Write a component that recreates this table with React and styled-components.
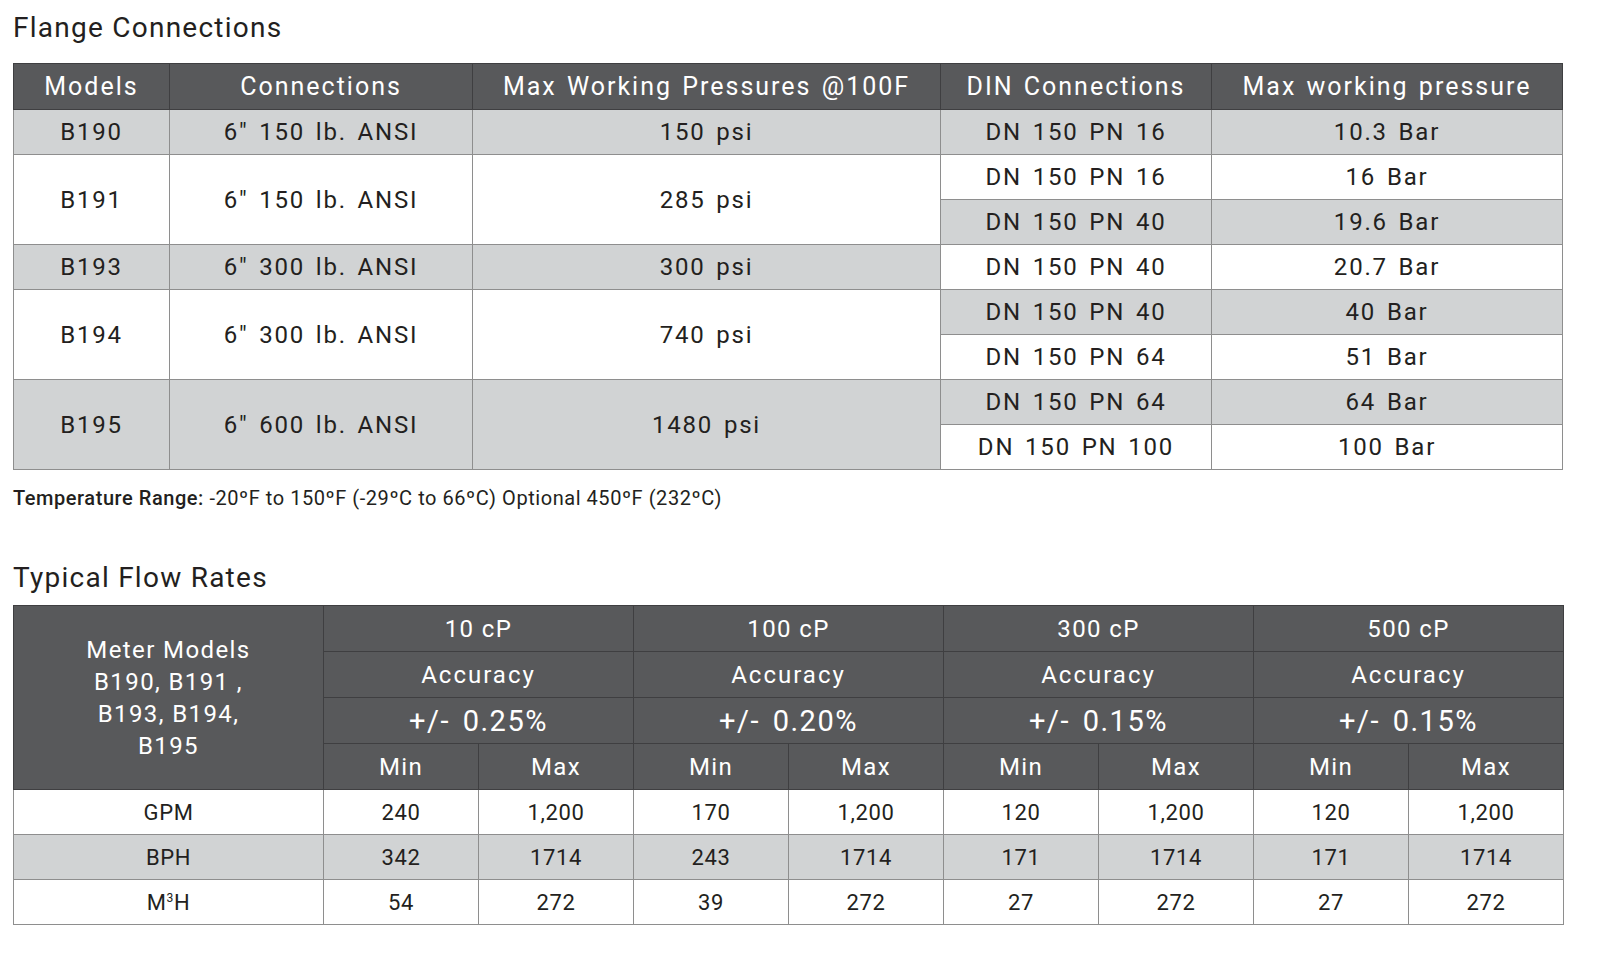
import React from 'react';
import styled, { createGlobalStyle } from 'styled-components';

const GlobalStyle = createGlobalStyle`
  html, body {
    margin: 0;
    padding: 0;
    background: #ffffff;
  }
  body {
    font-family: Roboto, 'Liberation Sans', sans-serif;
    color: #231f20;
  }
`;

const Page = styled.div`
  width: 1598px;
  padding: 10px 0 0 13px;
  box-sizing: border-box;
`;

const Title = styled.h2`
  margin: ${(p) => p.$top || 0}px 0 0;
  font-size: 28px;
  font-weight: 400;
  line-height: 36px;
  letter-spacing: 1.25px;
  color: #231f20;
`;

const Table = styled.table`
  border-collapse: collapse;
  table-layout: fixed;
  width: ${(p) => p.$width}px;
  margin-top: ${(p) => p.$top}px;
  border: 1.5px solid #8a8a8a;
`;

const Head = styled.th`
  background: #58595b;
  color: #ffffff;
  font-weight: 400;
  font-size: ${(p) => (p.$wide ? 25 : p.$size || 24)}px;
  letter-spacing: ${(p) => (p.$wide ? 2 : p.$ls || 1.4)}px;
  word-spacing: ${(p) => (p.$wide ? 2 : p.$ws || 0)}px;
  height: ${(p) => p.$h || 45}px;
  padding: 0;
  text-align: center;
  border: 1.5px solid #3f3f41;
  line-height: ${(p) => p.$lh || 'normal'};
`;

const Cell = styled.td`
  background: ${(p) => (p.$shade ? '#d1d3d4' : '#ffffff')};
  font-size: ${(p) => (p.$wide ? 24 : 22)}px;
  letter-spacing: ${(p) => (p.$wide ? 1.8 : 0.6)}px;
  word-spacing: ${(p) => (p.$wide ? 3 : 0)}px;
  height: ${(p) => p.$h || 44}px;
  padding: 0;
  text-align: center;
  border: 1.5px solid #8e8e8e;
  color: #231f20;
`;

const Note = styled.p`
  margin: 16px 0 0;
  font-size: 20px;
  letter-spacing: 0.55px;
  color: #231f20;
  b {
    font-weight: 500;
  }
`;

const flange = [
  { model: 'B190', conn: '6″ 150 lb. ANSI', psi: '150 psi', din: [['DN 150 PN 16', '10.3 Bar']] },
  { model: 'B191', conn: '6″ 150 lb. ANSI', psi: '285 psi', din: [['DN 150 PN 16', '16 Bar'], ['DN 150 PN 40', '19.6 Bar']] },
  { model: 'B193', conn: '6″ 300 lb. ANSI', psi: '300 psi', din: [['DN 150 PN 40', '20.7 Bar']] },
  { model: 'B194', conn: '6″ 300 lb. ANSI', psi: '740 psi', din: [['DN 150 PN 40', '40 Bar'], ['DN 150 PN 64', '51 Bar']] },
  { model: 'B195', conn: '6″ 600 lb. ANSI', psi: '1480 psi', din: [['DN 150 PN 64', '64 Bar'], ['DN 150 PN 100', '100 Bar']] },
];

const viscosities = [
  { cp: '10 cP', acc: '+/- 0.25%' },
  { cp: '100 cP', acc: '+/- 0.20%' },
  { cp: '300 cP', acc: '+/- 0.15%' },
  { cp: '500 cP', acc: '+/- 0.15%' },
];

const flows = [
  { unit: 'GPM', values: ['240', '1,200', '170', '1,200', '120', '1,200', '120', '1,200'] },
  { unit: 'BPH', values: ['342', '1714', '243', '1714', '171', '1714', '171', '1714'] },
  { unit: <>M<sup style={{ fontSize: '0.55em' }}>3</sup>H</>, values: ['54', '272', '39', '272', '27', '272', '27', '272'] },
];

const FlangeTable = () => {
  let sub = 0;
  return (
    <Table $width={1549} $top={17}>
      <colgroup>
        <col style={{ width: 156 }} />
        <col style={{ width: 303 }} />
        <col style={{ width: 468 }} />
        <col style={{ width: 271 }} />
        <col style={{ width: 351 }} />
      </colgroup>
      <thead>
        <tr>
          <Head $wide>Models</Head>
          <Head $wide>Connections</Head>
          <Head $wide>Max Working Pressures @100F</Head>
          <Head $wide>DIN Connections</Head>
          <Head $wide>Max working pressure</Head>
        </tr>
      </thead>
      <tbody>
        {flange.map((row, i) =>
          row.din.map((d, j) => {
            sub += 1;
            const dinShade = sub % 2 === 1;
            return (
              <tr key={`${i}-${j}`}>
                {j === 0 && (
                  <>
                    <Cell $wide rowSpan={row.din.length} $shade={i % 2 === 0}>{row.model}</Cell>
                    <Cell $wide rowSpan={row.din.length} $shade={i % 2 === 0}>{row.conn}</Cell>
                    <Cell $wide rowSpan={row.din.length} $shade={i % 2 === 0}>{row.psi}</Cell>
                  </>
                )}
                <Cell $wide $shade={dinShade}>{d[0]}</Cell>
                <Cell $wide $shade={dinShade}>{d[1]}</Cell>
              </tr>
            );
          })
        )}
      </tbody>
    </Table>
  );
};

const FlowTable = () => (
  <Table $width={1551} $top={9}>
    <colgroup>
      <col style={{ width: 310 }} />
      {Array.from({ length: 8 }).map((_, i) => (
        <col key={i} style={{ width: 155 }} />
      ))}
    </colgroup>
    <thead>
      <tr>
        <Head rowSpan={4} $lh="32px">
          Meter Models
          <br />
          B190, B191 ,
          <br />
          B193, B194,
          <br />
          B195
        </Head>
        {viscosities.map((v) => (
          <Head key={v.cp} colSpan={2}>{v.cp}</Head>
        ))}
      </tr>
      <tr>
        {viscosities.map((v) => (
          <Head key={v.cp} colSpan={2} $ls={2}>Accuracy</Head>
        ))}
      </tr>
      <tr>
        {viscosities.map((v) => (
          <Head key={v.cp} colSpan={2} $size={29} $ls={1.5} $ws={4}>{v.acc}</Head>
        ))}
      </tr>
      <tr>
        {viscosities.map((v) => (
          <React.Fragment key={v.cp}>
            <Head>Min</Head>
            <Head>Max</Head>
          </React.Fragment>
        ))}
      </tr>
    </thead>
    <tbody>
      {flows.map((row, i) => (
        <tr key={i}>
          <Cell $shade={i === 1}>{row.unit}</Cell>
          {row.values.map((v, k) => (
            <Cell key={k} $shade={i === 1}>{v}</Cell>
          ))}
        </tr>
      ))}
    </tbody>
  </Table>
);

export default function App() {
  return (
    <>
      <GlobalStyle />
      <Page>
        <Title>Flange Connections</Title>
        <FlangeTable />
        <Note>
          <b>Temperature Range:</b> -20ºF to 150ºF (-29ºC to 66ºC) Optional 450ºF (232ºC)
        </Note>
        <Title $top={50}>Typical Flow Rates</Title>
        <FlowTable />
      </Page>
    </>
  );
}
